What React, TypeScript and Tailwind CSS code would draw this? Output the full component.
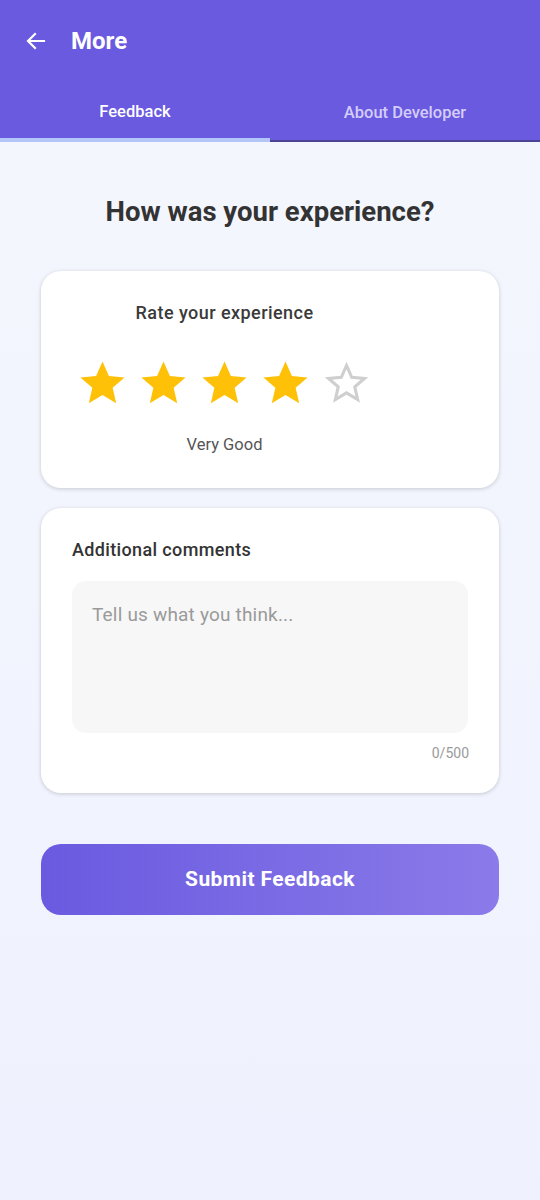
import React from "react";

const Star = ({ filled }: { filled: boolean }) => (
  <svg width="53" height="53" viewBox="0 0 24 24">
    {filled ? (
      <path d="M12 2.5l2.9 6.6 7.1.6-5.4 4.7 1.6 7-6.2-3.7-6.2 3.7 1.6-7L2 9.7l7.1-.6z" fill="#FFC107" />
    ) : (
      <path d="M12 4.3l2.35 5.35 5.8.5-4.4 3.83 1.3 5.7L12 16.68 6.95 19.7l1.3-5.7-4.4-3.83 5.8-.5z" fill="none" stroke="#cfcfcf" strokeWidth="1.4" strokeLinejoin="miter" />
    )}
  </svg>
);

export default function App() {
  return (
    <div className="min-h-[1200px] w-[540px] bg-gradient-to-b from-[#f5f7fe] to-[#eff1fe] font-['Roboto',sans-serif]">
      <div className="bg-[#6a5ae0]">
        <div className="flex h-[82px] items-center pl-[24px]">
          <svg width="24" height="24" viewBox="0 0 24 24" fill="none" stroke="white" strokeWidth="2.2" strokeLinecap="square">
            <path d="M20 12H5M11 5l-7 7 7 7" />
          </svg>
          <span className="ml-[23px] text-[24px] font-bold text-white">More</span>
        </div>
        <div className="flex h-[60px]">
          <div className="flex flex-1 flex-col">
            <div className="flex flex-1 items-center justify-center pt-[5px] text-[16.5px] font-medium text-white">Feedback</div>
            <div className="h-[4px] bg-[#b3c6f8]" />
          </div>
          <div className="flex flex-1 flex-col">
            <div className="flex flex-1 items-center justify-center pt-[5px] text-[16.5px] font-medium text-[#d4cdf8]">About Developer</div>
            <div className="h-[2px] bg-[#4b4494]" />
          </div>
        </div>
      </div>

      <div className="px-[41px]">
        <h1 className="pt-[50px] text-center text-[27.5px] font-bold leading-[40px] text-[#333333]">How was your experience?</h1>

        <div className="mt-[39px] h-[217px] rounded-[20px] bg-white pl-[35px] pt-[28px] shadow-[0_1px_4px_rgba(0,0,0,0.18)]">
          <div className="inline-flex flex-col items-center">
            <div className="text-[18px] font-medium leading-[27px] tracking-[0.025em] text-[#3a3a3a]">Rate your experience</div>
            <div className="mt-[30px] flex gap-[8px]">
              <Star filled />
              <Star filled />
              <Star filled />
              <Star filled />
              <Star filled={false} />
            </div>
            <div className="mt-[23px] text-[16.5px] leading-[25px] text-[#555555]">Very Good</div>
          </div>
        </div>

        <div className="mt-[20px] h-[285px] rounded-[20px] bg-white px-[31px] pt-[28px] shadow-[0_1px_4px_rgba(0,0,0,0.18)]">
          <div className="text-[18px] font-medium leading-[27px] tracking-[0.02em] text-[#333333]">Additional comments</div>
          <div className="mt-[18px] h-[152px] rounded-[14px] bg-[#f7f7f7] px-[20px] pt-[20px] text-[19px] leading-[28px] tracking-[0.01em] text-[#9a9a9a]">Tell us what you think...</div>
          <div className="mr-[-1px] mt-[10px] text-right text-[14px] leading-[21px] text-[#9a9a9a]">0/500</div>
        </div>

        <div className="mt-[51px] flex h-[71px] items-center justify-center rounded-[20px] bg-gradient-to-r from-[#6a5ae0] to-[#8b7ae9] text-[21px] font-bold tracking-[0.02em] text-white">
          Submit Feedback
        </div>
      </div>
    </div>
  );
}
